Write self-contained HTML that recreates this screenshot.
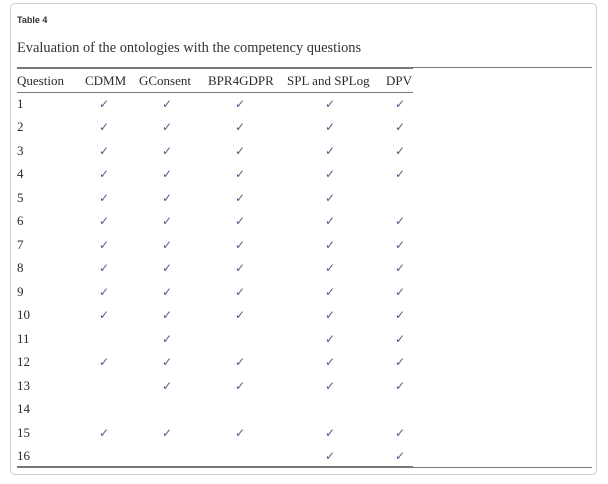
<!DOCTYPE html>
<html><head><meta charset="utf-8"><style>
html,body{margin:0;padding:0;background:#fff;width:608px;height:484px;overflow:hidden}
.card{position:absolute;left:10px;top:3px;width:587px;height:472px;border:1px solid #cfcfcf;border-radius:5px;box-sizing:border-box}
.lbl{position:absolute;left:17px;top:15px;font:bold 9px "Liberation Sans",sans-serif;color:#333}
.cap{position:absolute;left:17px;top:40px;font:14.4px "Liberation Serif",serif;color:#333;white-space:nowrap}
.t{position:absolute;font:13px "Liberation Serif",serif;color:#2a2a2a;white-space:nowrap}
.c{position:absolute;font:12px "DejaVu Sans",sans-serif;color:#4a5f88;width:20px;text-align:center}
.ln{position:absolute;background:#777}
</style></head><body>
<div class="card"></div>
<div class="lbl">Table 4</div>
<div class="cap">Evaluation of the ontologies with the competency questions</div>
<div class="ln" style="left:17px;top:67px;width:396px;height:2px"></div>
<div class="ln" style="left:413px;top:67px;width:179px;height:1px"></div>
<div class="ln" style="left:17px;top:92px;width:396px;height:1px"></div>
<div class="t" style="left:17px;top:73px">Question</div>
<div class="t" style="left:85px;top:73px">CDMM</div>
<div class="t" style="left:139px;top:73px">GConsent</div>
<div class="t" style="left:208px;top:73px">BPR4GDPR</div>
<div class="t" style="left:287px;top:73px">SPL and SPLog</div>
<div class="t" style="left:386px;top:73px">DPV</div>
<div id="rows"></div>
<div class="ln" style="left:17px;top:466px;width:396px;height:2px"></div>
<div class="ln" style="left:413px;top:467px;width:179px;height:1px"></div>
<script>
var d=[[1,1,1,1,1],[1,1,1,1,1],[1,1,1,1,1],[1,1,1,1,1],[1,1,1,1,0],[1,1,1,1,1],[1,1,1,1,1],[1,1,1,1,1],[1,1,1,1,1],[1,1,1,1,1],[0,1,0,1,1],[1,1,1,1,1],[0,1,1,1,1],[0,0,0,0,0],[1,1,1,1,1],[0,0,0,1,1]];
var xs=[104,167,240,330,400],h='';
for(var i=0;i<16;i++){var y=96+i*23.47;
h+='<div class="t" style="left:17px;top:'+y+'px">'+(i+1)+'</div>';
for(var j=0;j<5;j++)if(d[i][j])h+='<div class="c" style="left:'+(xs[j]-10)+'px;top:'+(y+1)+'px">✓</div>';}
document.getElementById('rows').innerHTML=h;
</script>
</body></html>
